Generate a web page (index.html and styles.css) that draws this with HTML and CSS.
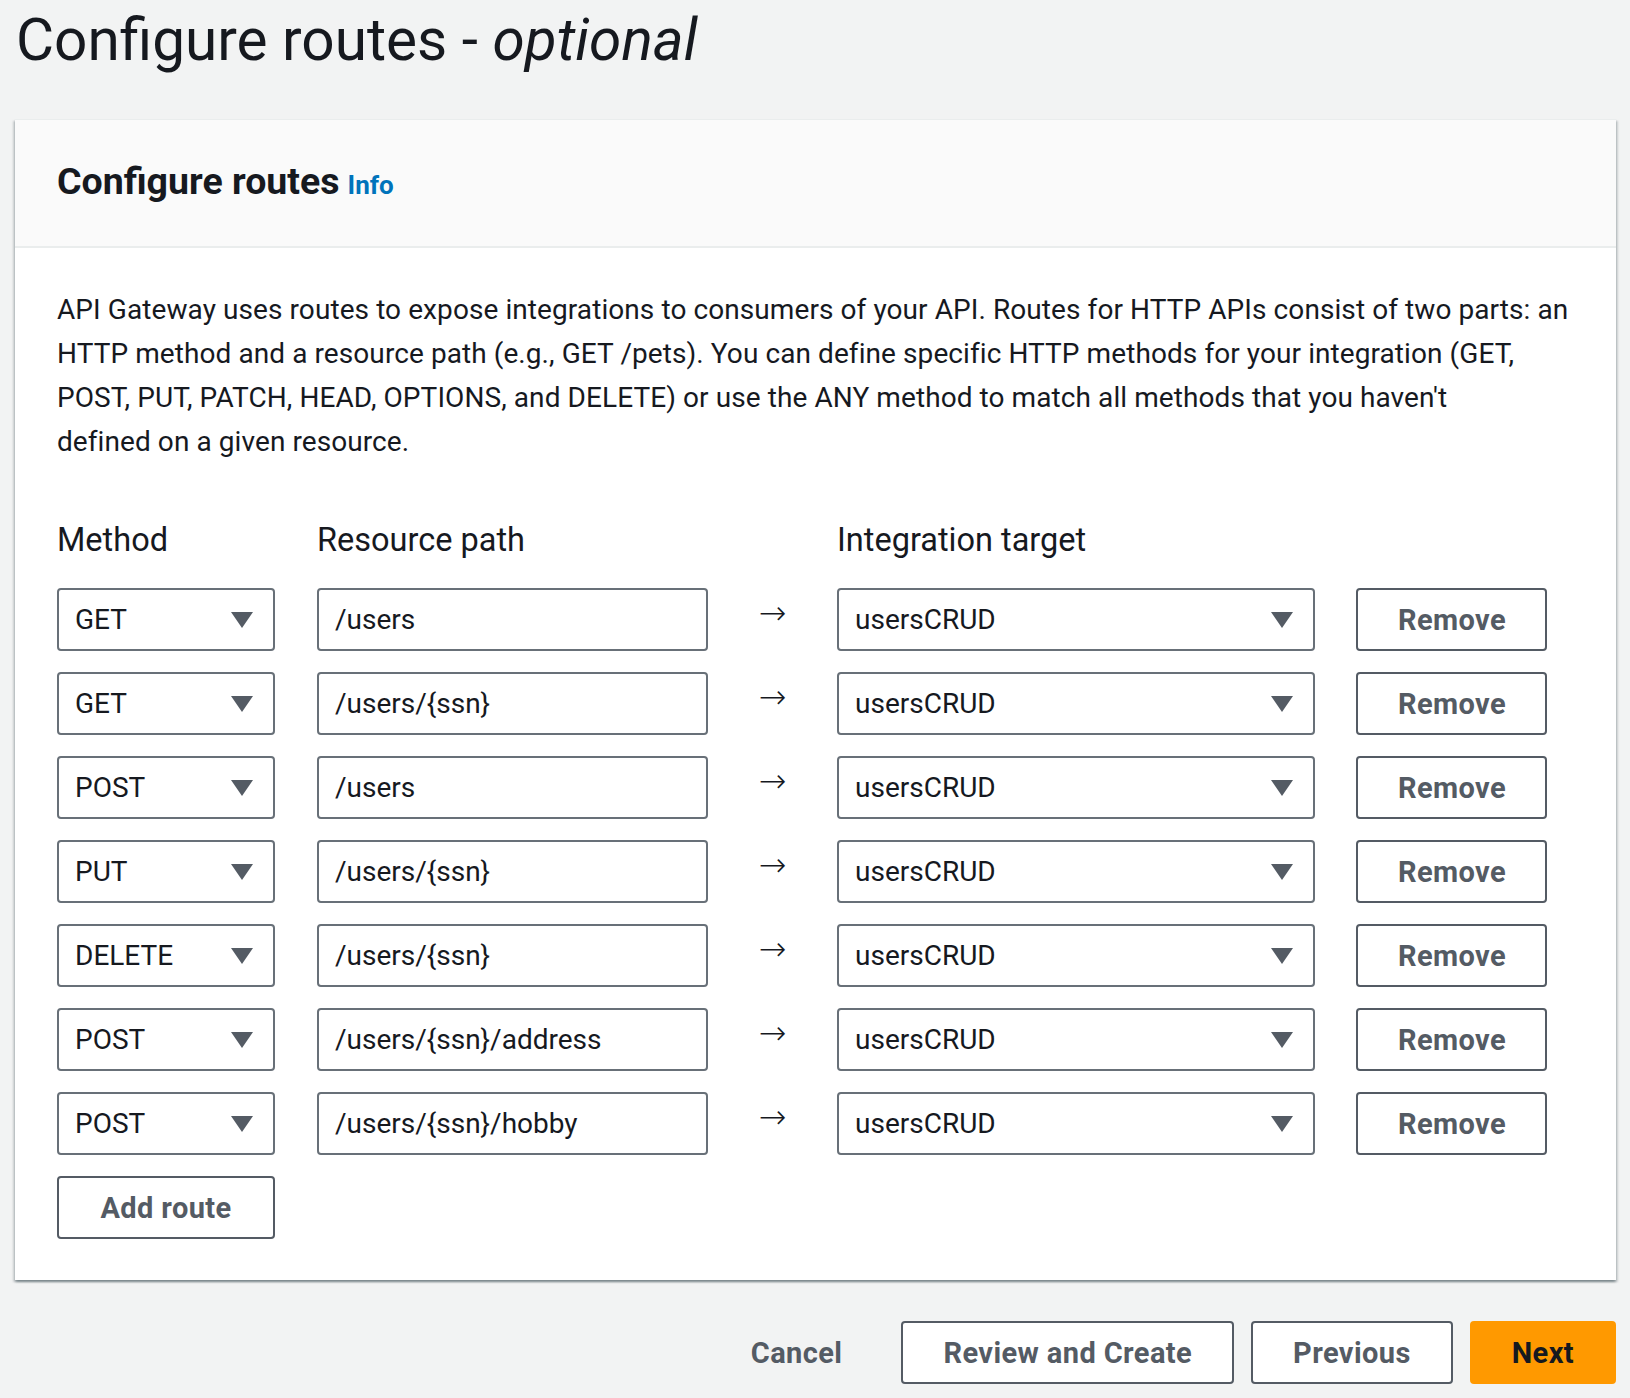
FILE: index.html
```html
<!DOCTYPE html>
<html lang="en">
<head>
<meta charset="utf-8">
<title>Configure routes</title>
<link rel="stylesheet" href="styles.css">
</head>
<body>
<div class="page">
  <h1 class="page-title">Configure routes - <em>optional</em></h1>

  <section class="card">
    <header class="card-header">
      <h2 class="card-title">Configure routes</h2>
      <a class="info-link" href="#">Info</a>
    </header>
    <div class="card-body">
      <p class="intro">API Gateway uses routes to expose integrations to consumers of your API. Routes for HTTP APIs consist of two parts: an<br>HTTP method and a resource path (e.g., GET /pets). You can define specific HTTP methods for your integration (GET,<br>POST, PUT, PATCH, HEAD, OPTIONS, and DELETE) or use the ANY method to match all methods that you haven't<br>defined on a given resource.</p>

      <div class="route-row labels">
        <div class="col-method">Method</div>
        <div class="col-path">Resource path</div>
        <div class="col-arrow"></div>
        <div class="col-target">Integration target</div>
      </div>

      <div class="route-row">
        <div class="col-method select"><span>GET</span><span class="caret"></span></div>
        <div class="col-path input">/users</div>
        <div class="col-arrow">→</div>
        <div class="col-target select"><span>usersCRUD</span><span class="caret"></span></div>
        <button class="btn col-remove">Remove</button>
      </div>
      <div class="route-row">
        <div class="col-method select"><span>GET</span><span class="caret"></span></div>
        <div class="col-path input">/users/{ssn}</div>
        <div class="col-arrow">→</div>
        <div class="col-target select"><span>usersCRUD</span><span class="caret"></span></div>
        <button class="btn col-remove">Remove</button>
      </div>
      <div class="route-row">
        <div class="col-method select"><span>POST</span><span class="caret"></span></div>
        <div class="col-path input">/users</div>
        <div class="col-arrow">→</div>
        <div class="col-target select"><span>usersCRUD</span><span class="caret"></span></div>
        <button class="btn col-remove">Remove</button>
      </div>
      <div class="route-row">
        <div class="col-method select"><span>PUT</span><span class="caret"></span></div>
        <div class="col-path input">/users/{ssn}</div>
        <div class="col-arrow">→</div>
        <div class="col-target select"><span>usersCRUD</span><span class="caret"></span></div>
        <button class="btn col-remove">Remove</button>
      </div>
      <div class="route-row">
        <div class="col-method select"><span>DELETE</span><span class="caret"></span></div>
        <div class="col-path input">/users/{ssn}</div>
        <div class="col-arrow">→</div>
        <div class="col-target select"><span>usersCRUD</span><span class="caret"></span></div>
        <button class="btn col-remove">Remove</button>
      </div>
      <div class="route-row">
        <div class="col-method select"><span>POST</span><span class="caret"></span></div>
        <div class="col-path input">/users/{ssn}/address</div>
        <div class="col-arrow">→</div>
        <div class="col-target select"><span>usersCRUD</span><span class="caret"></span></div>
        <button class="btn col-remove">Remove</button>
      </div>
      <div class="route-row">
        <div class="col-method select"><span>POST</span><span class="caret"></span></div>
        <div class="col-path input">/users/{ssn}/hobby</div>
        <div class="col-arrow">→</div>
        <div class="col-target select"><span>usersCRUD</span><span class="caret"></span></div>
        <button class="btn col-remove">Remove</button>
      </div>

      <button class="btn add-route">Add route</button>
    </div>
  </section>

  <footer class="actions">
    <button class="btn btn-link">Cancel</button>
    <button class="btn">Review and Create</button>
    <button class="btn">Previous</button>
    <button class="btn btn-primary">Next</button>
  </footer>
</div>
</body>
</html>
```

FILE: styles.css
```css
* { box-sizing: border-box; }

body {
  margin: 0;
  background: #f2f3f3;
  color: #16191f;
  font-family: Roboto, "Liberation Sans", sans-serif;
}

.page {
  padding: 0 14px 40px 15px;
}

.page-title {
  margin: 0 0 39px 1px;
  font-size: 58.5px;
  line-height: 80px;
  font-weight: 400;
}

.page-title em {
  font-style: italic;
}

.card {
  background: #fff;
  border-top: 1px solid #eaeded;
  box-shadow: 0 2px 2px 0 rgba(0, 28, 36, 0.3), 2px 2px 2px 0 rgba(0, 28, 36, 0.15), -2px 2px 2px 0 rgba(0, 28, 36, 0.15);
}

.card-header {
  height: 128px;
  padding: 0 42px 4px;
  display: flex;
  align-items: baseline;
  align-content: center;
  flex-wrap: wrap;
  gap: 8px;
  background: #fafafa;
  border-bottom: 2px solid #eaeded;
}

.card-title {
  margin: 0;
  font-size: 37.5px;
  line-height: 44px;
  font-weight: 700;
}

.info-link {
  color: #0073bb;
  font-size: 26px;
  font-weight: 700;
  text-decoration: none;
}

.card-body {
  padding: 40px 42px 41px;
}

.intro {
  margin: 0 0 54px;
  font-size: 28px;
  line-height: 44px;
  letter-spacing: 0.08px;
  white-space: nowrap;
}

.route-row {
  display: flex;
  align-items: stretch;
  margin-bottom: 21px;
  font-size: 28px;
}

.route-row.labels {
  font-size: 32.5px;
  line-height: 44px;
  margin-bottom: 26px;
}

.col-method { width: 218px; margin-right: 42px; }
.col-path { width: 391px; }
.col-arrow {
  width: 129px;
  padding-top: 5px;
  text-align: center;
  font-size: 33px;
  line-height: 40px;
  font-family: "DejaVu Sans", sans-serif;
  font-weight: 200;
}
.col-target { width: 478px; margin-right: 41px; }
.col-remove { width: 191px; }

.select,
.input {
  height: 63px;
  border: 2px solid #687078;
  border-radius: 4px;
  padding: 0 16px;
  display: flex;
  align-items: center;
  justify-content: space-between;
  background: #fff;
}

.caret {
  width: 0;
  height: 0;
  margin-right: 4px;
  border-left: 11px solid transparent;
  border-right: 11px solid transparent;
  border-top: 16px solid #545b64;
}

.btn {
  height: 63px;
  padding: 0 40px;
  border: 2px solid #545b64;
  border-radius: 4px;
  background: #fff;
  color: #545b64;
  font-family: inherit;
  font-size: 29px;
  letter-spacing: 0.4px;
  font-weight: 700;
  cursor: pointer;
}

.add-route {
  width: 218px;
  padding: 0;
}

.actions {
  display: flex;
  justify-content: flex-end;
  gap: 17px;
  margin-top: 41px;
}

.btn-link {
  border-color: transparent;
  background: transparent;
}

.btn-primary {
  background: #ff9900;
  border-color: #ff9900;
  color: #16191f;
}
```
